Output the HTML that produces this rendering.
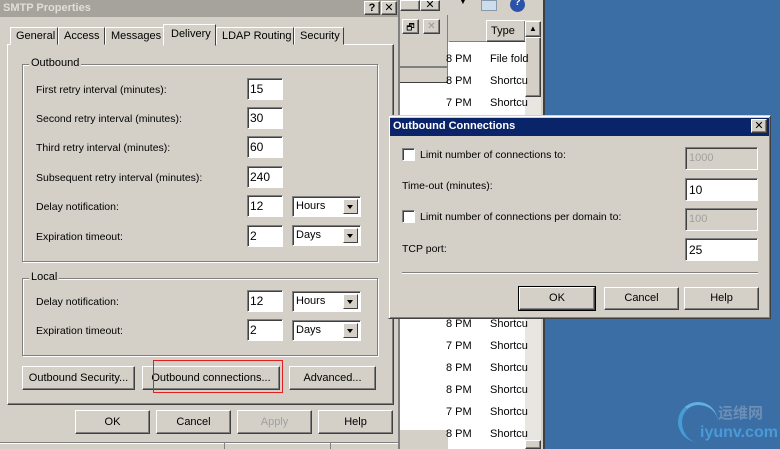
<!DOCTYPE html>
<html><head><meta charset="utf-8"><style>
*{box-sizing:border-box;margin:0;padding:0}
html{width:780px;height:449px;overflow:hidden}
body{width:780px;height:449px;overflow:hidden;background:#3a6ea5;font-family:"Liberation Sans","Noto Sans CJK SC",sans-serif;font-size:10px;color:#000;position:relative}
.a{position:absolute}
.g{background:#d4d0c8}
.raised{border:1px solid;border-color:#fff #404040 #404040 #fff;box-shadow:inset -1px -1px 0 #808080}
.sunk{background:#fff;border:1px solid;border-color:#808080 #fff #fff #808080;box-shadow:inset 1px 1px 0 #404040}
.btn{position:absolute;background:#d4d0c8;border:1px solid;border-color:#fff #404040 #404040 #fff;box-shadow:inset -1px -1px 0 #808080;text-align:center;font-size:11px}
.tb{position:absolute;height:22px;width:36px;padding:3px 0 0 2px;font-size:12px}
.lbl{position:absolute;font-size:10.5px;white-space:nowrap}
.grp{position:absolute;border:1px solid #808080;box-shadow:1px 1px 0 #fff,inset 1px 1px 0 #fff}
.grp span{position:absolute;top:-8px;left:6px;background:#d4d0c8;padding:0 2px;font-size:11px}
.cb{position:absolute;width:69px;height:21px;background:#fff;border:1px solid;border-color:#808080 #fff #fff #808080;box-shadow:inset 1px 1px 0 #404040;padding:3px 0 0 3px;font-size:11px}
.cb i{position:absolute;right:2px;top:2px;width:15px;height:15px;background:#d4d0c8;border:1px solid;border-color:#fff #404040 #404040 #fff}
.cb i:after{content:"";position:absolute;left:3px;top:5px;border:3.5px solid transparent;border-top:4px solid #000;border-bottom:0}
.ex{position:absolute;font-size:11px}
.tab{position:absolute;top:27px;height:18px;background:#d4d0c8;border:1px solid;border-color:#fff #404040 transparent #fff;padding:2px 0 0 5px;font-size:11px}
</style></head><body>

<!-- explorer behind -->
<div class="a g" style="left:398px;top:0;width:147px;height:449px"></div>
<div class="a" style="left:543px;top:0;width:2px;height:449px;background:#404040"></div>
<div class="a raised g" style="left:400px;top:0;width:20px;height:11px"></div>
<div class="a raised g" style="left:420px;top:0;width:20px;height:11px;font-size:11px;text-align:center;line-height:9px">✕</div>
<div class="a" style="left:400px;top:15px;width:48px;height:300px;border-right:1px solid #808080"></div>
<div class="a raised g" style="left:402px;top:19px;width:17px;height:15px;font-size:9px;text-align:center">🗗</div>
<div class="a raised g" style="left:423px;top:19px;width:17px;height:15px;color:#999;text-align:center;line-height:13px">✕</div>
<div class="a" style="left:400px;top:66px;width:48px;height:2px;background:#808080"></div>
<div class="a" style="left:400px;top:82px;width:48px;height:348px;background:#fff;border-top:1px solid #404040"></div>
<div class="a" style="left:398px;top:0;width:2px;height:449px;background:#808080"></div>
<div class="ex" style="left:458px;top:-4px;font-size:10px">▼</div>
<div class="a" style="left:481px;top:0;width:16px;height:11px;background:#cde;border:1px solid #89a"></div>
<div class="a" style="left:510px;top:-3px;width:15px;height:15px;border-radius:50%;background:#2a52a8;color:#fff;font-size:10px;text-align:center;font-weight:bold">?</div>
<div class="a" style="left:449px;top:20px;width:76px;height:22px;border-bottom:1px solid #808080"></div>
<div class="a raised" style="left:486px;top:20px;width:40px;height:22px;padding:4px 0 0 4px;font-size:11px">Type</div>
<div class="a" style="left:448px;top:42px;width:77px;height:407px;background:#fff"></div>
<div class="a" style="left:525px;top:20px;width:16px;height:429px;background:#e8e6e0"></div>
<div class="a raised g" style="left:525px;top:21px;width:16px;height:16px;font-size:8px;text-align:center;line-height:14px">▲</div>
<div class="a raised g" style="left:525px;top:37px;width:16px;height:60px"></div>
<div class="a raised g" style="left:525px;top:200px;width:16px;height:97px"></div>
<div class="a raised g" style="left:525px;top:440px;width:16px;height:9px"></div>
<div class="ex" style="left:446px;top:53px">8 PM</div><div class="ex" style="left:490px;top:53px">File fold</div>
<div class="ex" style="left:446px;top:75px">8 PM</div><div class="ex" style="left:490px;top:75px">Shortcu</div>
<div class="ex" style="left:446px;top:97px">7 PM</div><div class="ex" style="left:490px;top:97px">Shortcu</div>
<div class="ex" style="left:446px;top:318px">8 PM</div><div class="ex" style="left:490px;top:318px">Shortcu</div>
<div class="ex" style="left:446px;top:340px">7 PM</div><div class="ex" style="left:490px;top:340px">Shortcu</div>
<div class="ex" style="left:446px;top:362px">8 PM</div><div class="ex" style="left:490px;top:362px">Shortcu</div>
<div class="ex" style="left:446px;top:384px">8 PM</div><div class="ex" style="left:490px;top:384px">Shortcu</div>
<div class="ex" style="left:446px;top:406px">7 PM</div><div class="ex" style="left:490px;top:406px">Shortcu</div>
<div class="ex" style="left:446px;top:428px">8 PM</div><div class="ex" style="left:490px;top:428px">Shortcu</div>

<!-- SMTP dialog -->
<div class="a g" style="left:0;top:0;width:398px;height:449px"></div>
<div class="a" style="left:0;top:0;width:398px;height:17px;background:#a6a39c;color:#e0ded8;font-weight:bold;font-size:11px;padding:2px 0 0 3px">SMTP Properties</div>
<div class="btn" style="left:364px;top:1px;width:16px;height:14px;font-weight:bold;line-height:12px">?</div>
<div class="btn" style="left:381px;top:1px;width:16px;height:14px;line-height:12px">✕</div>
<div class="a" style="left:7px;top:44px;width:387px;height:361px;border:1px solid;border-color:#fff #404040 #404040 #fff;box-shadow:inset -1px -1px 0 #808080"></div>
<div class="a" style="left:0;top:442px;width:398px;height:1px;background:#808080"></div>
<div class="a" style="left:0;top:443px;width:398px;height:1px;background:#fff"></div>
<div class="a" style="left:224px;top:443px;width:1px;height:6px;background:#808080"></div>
<div class="a" style="left:330px;top:443px;width:1px;height:6px;background:#808080"></div>
<div class="tab" style="left:10px;width:48px">General</div>
<div class="tab" style="left:58px;width:47px">Access</div>
<div class="tab" style="left:105px;width:59px">Messages</div>
<div class="tab" style="left:163px;top:24px;width:53px;height:22px;padding:3px 0 0 7px;z-index:2">Delivery</div>
<div class="tab" style="left:216px;width:78px">LDAP Routing</div>
<div class="tab" style="left:294px;width:50px">Security</div>

<div class="grp" style="left:22px;top:64px;width:356px;height:198px"><span>Outbound</span></div>
<div class="lbl" style="left:36px;top:84px">First retry interval (minutes):</div>
<div class="lbl" style="left:36px;top:113px">Second retry interval (minutes):</div>
<div class="lbl" style="left:36px;top:142px">Third retry interval (minutes):</div>
<div class="lbl" style="left:36px;top:172px">Subsequent retry interval (minutes):</div>
<div class="lbl" style="left:36px;top:201px">Delay notification:</div>
<div class="lbl" style="left:36px;top:231px">Expiration timeout:</div>
<div class="tb sunk" style="left:247px;top:78px">15</div>
<div class="tb sunk" style="left:247px;top:107px">30</div>
<div class="tb sunk" style="left:247px;top:136px">60</div>
<div class="tb sunk" style="left:247px;top:166px">240</div>
<div class="tb sunk" style="left:247px;top:195px">12</div>
<div class="tb sunk" style="left:247px;top:225px">2</div>
<div class="cb" style="left:292px;top:196px">Hours<i></i></div>
<div class="cb" style="left:292px;top:225px">Days<i></i></div>

<div class="grp" style="left:22px;top:278px;width:356px;height:78px"><span>Local</span></div>
<div class="lbl" style="left:36px;top:296px">Delay notification:</div>
<div class="lbl" style="left:36px;top:325px">Expiration timeout:</div>
<div class="tb sunk" style="left:247px;top:290px">12</div>
<div class="tb sunk" style="left:247px;top:319px">2</div>
<div class="cb" style="left:292px;top:291px">Hours<i></i></div>
<div class="cb" style="left:292px;top:320px">Days<i></i></div>

<div class="btn" style="left:22px;top:366px;width:113px;height:24px;padding-top:5px">Outbound Security...</div>
<div class="btn" style="left:142px;top:366px;width:138px;height:24px;padding-top:5px">Outbound connections...</div>
<div class="a" style="left:153px;top:360px;width:130px;height:33px;border:1px solid #e02020"></div>
<div class="btn" style="left:289px;top:366px;width:87px;height:24px;padding-top:5px">Advanced...</div>

<div class="btn" style="left:75px;top:410px;width:75px;height:24px;padding-top:5px">OK</div>
<div class="btn" style="left:156px;top:410px;width:75px;height:24px;padding-top:5px">Cancel</div>
<div class="btn" style="left:237px;top:410px;width:75px;height:24px;padding-top:5px;color:#a0a0a0">Apply</div>
<div class="btn" style="left:318px;top:410px;width:75px;height:24px;padding-top:5px">Help</div>

<!-- Outbound Connections dialog -->
<div class="a g" style="left:388px;top:115px;width:383px;height:204px;border:1px solid;border-color:#d4d0c8 #404040 #404040 #d4d0c8;box-shadow:inset 1px 1px 0 #fff,inset -1px -1px 0 #808080"></div>
<div class="a" style="left:390px;top:118px;width:379px;height:18px;background:#0a246a;color:#fff;font-weight:bold;padding:2px 0 0 3px;font-size:11px">Outbound Connections</div>
<div class="btn" style="left:751px;top:119px;width:16px;height:14px;line-height:12px">✕</div>
<div class="a sunk" style="left:402px;top:148px;width:13px;height:13px"></div>
<div class="lbl" style="left:420px;top:149px">Limit number of connections to:</div>
<div class="a" style="left:685px;top:147px;width:73px;height:23px;border:1px solid;border-color:#808080 #fff #fff #808080;box-shadow:inset 1px 1px 0 #404040;color:#a0a0a0;padding:4px 0 0 3px;font-size:11px">1000</div>
<div class="lbl" style="left:402px;top:180px">Time-out (minutes):</div>
<div class="a sunk" style="left:685px;top:178px;width:73px;height:23px;padding:4px 0 0 3px;font-size:12px">10</div>
<div class="a sunk" style="left:402px;top:210px;width:13px;height:13px"></div>
<div class="lbl" style="left:420px;top:211px">Limit number of connections per domain to:</div>
<div class="a" style="left:685px;top:208px;width:73px;height:23px;border:1px solid;border-color:#808080 #fff #fff #808080;box-shadow:inset 1px 1px 0 #404040;color:#a0a0a0;padding:4px 0 0 3px;font-size:11px">100</div>
<div class="lbl" style="left:402px;top:243px">TCP port:</div>
<div class="a sunk" style="left:685px;top:238px;width:73px;height:23px;padding:4px 0 0 3px;font-size:12px">25</div>
<div class="a" style="left:402px;top:272px;width:356px;height:1px;background:#808080;box-shadow:0 1px 0 #fff"></div>
<div class="btn" style="left:519px;top:287px;width:76px;height:23px;padding-top:4px;outline:1px solid #000">OK</div>
<div class="btn" style="left:604px;top:287px;width:75px;height:23px;padding-top:4px">Cancel</div>
<div class="btn" style="left:684px;top:287px;width:75px;height:23px;padding-top:4px">Help</div>

<!-- watermark -->
<div class="a" style="left:678px;top:402px;width:40px;height:40px;border-radius:50%;border-left:4px solid #4aa8e0;border-top:3px solid #6cc0f0;opacity:.8"></div>
<div class="a" style="left:718px;top:402px;color:#6d8fb5;font-size:15px;font-weight:bold">运维网</div>
<div class="a" style="left:700px;top:424px;color:#4a9ad8;font-size:16px;font-weight:bold">iyunv.com</div>
</body></html>
